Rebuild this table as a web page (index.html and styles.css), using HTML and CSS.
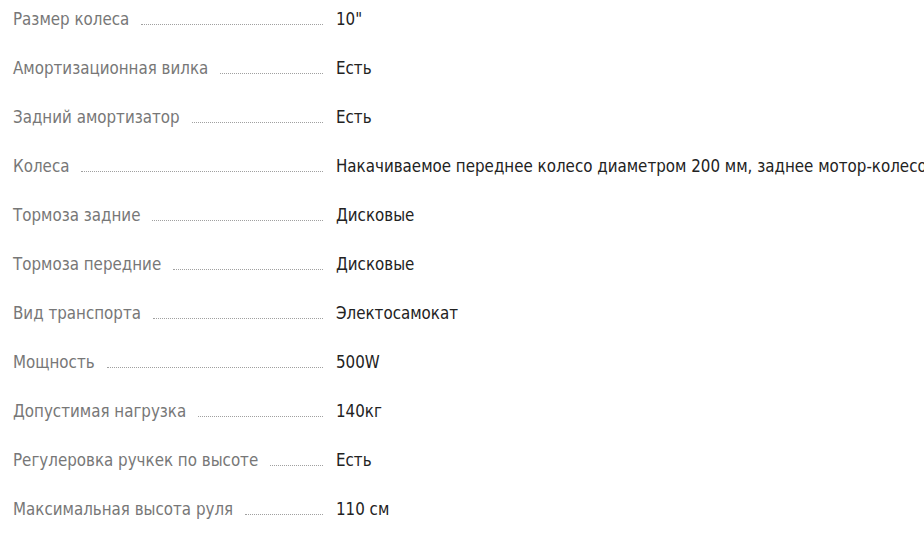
FILE: index.html
```html
<!DOCTYPE html>
<html lang="ru">
<head>
<meta charset="utf-8">
<title>Характеристики</title>
<link rel="stylesheet" href="styles.css">
</head>
<body>
<ul class="specs">
  <li class="spec"><span class="spec-name"><span class="spec-label">Размер колеса</span><span class="spec-dots"></span></span><span class="spec-value">10"</span></li>
  <li class="spec"><span class="spec-name"><span class="spec-label">Амортизационная вилка</span><span class="spec-dots"></span></span><span class="spec-value">Есть</span></li>
  <li class="spec"><span class="spec-name"><span class="spec-label">Задний амортизатор</span><span class="spec-dots"></span></span><span class="spec-value">Есть</span></li>
  <li class="spec"><span class="spec-name"><span class="spec-label">Колеса</span><span class="spec-dots"></span></span><span class="spec-value">Накачиваемое переднее колесо диаметром 200 мм, заднее мотор-колесо</span></li>
  <li class="spec"><span class="spec-name"><span class="spec-label">Тормоза задние</span><span class="spec-dots"></span></span><span class="spec-value">Дисковые</span></li>
  <li class="spec"><span class="spec-name"><span class="spec-label">Тормоза передние</span><span class="spec-dots"></span></span><span class="spec-value">Дисковые</span></li>
  <li class="spec"><span class="spec-name"><span class="spec-label">Вид транспорта</span><span class="spec-dots"></span></span><span class="spec-value">Электосамокат</span></li>
  <li class="spec"><span class="spec-name"><span class="spec-label">Мощность</span><span class="spec-dots"></span></span><span class="spec-value">500W</span></li>
  <li class="spec"><span class="spec-name"><span class="spec-label">Допустимая нагрузка</span><span class="spec-dots"></span></span><span class="spec-value">140кг</span></li>
  <li class="spec"><span class="spec-name"><span class="spec-label">Регулеровка ручкек по высоте</span><span class="spec-dots"></span></span><span class="spec-value">Есть</span></li>
  <li class="spec"><span class="spec-name"><span class="spec-label">Максимальная высота руля</span><span class="spec-dots"></span></span><span class="spec-value">110 см</span></li>
</ul>
</body>
</html>
```
FILE: styles.css
```css
html, body {
  margin: 0;
  padding: 0;
  background: #ffffff;
  overflow: hidden;
}
body {
  font-family: "DejaVu Sans Condensed", "DejaVu Sans", sans-serif;
  font-size: 16.8px;
}
.specs {
  list-style: none;
  margin: 0;
  padding: 0 0 0 13px;
}
.spec {
  display: flex;
  align-items: baseline;
  height: 49px;
  padding-top: 9px;
  box-sizing: border-box;
  line-height: 20px;
  white-space: nowrap;
}
.spec-name {
  display: flex;
  align-items: baseline;
  flex: 0 0 310px;
  width: 310px;
}
.spec-label {
  color: #777777;
}
.spec-dots {
  flex: 1;
  margin-left: 12px;
  border-bottom: 1px dotted #a0a0a0;
}
.spec-value {
  margin-left: 13px;
  color: #222222;
}
```
